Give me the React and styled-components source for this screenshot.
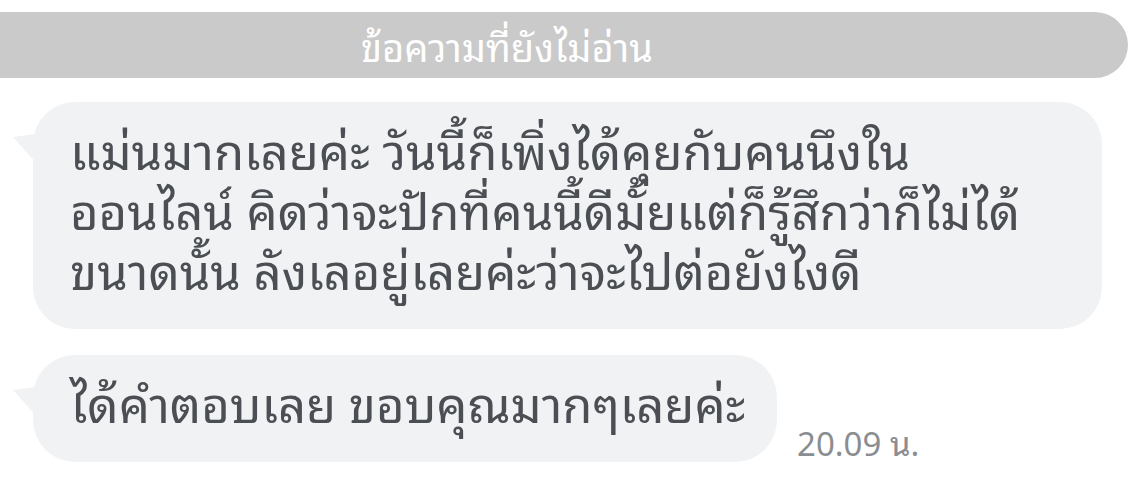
import React from "react";
import styled, { createGlobalStyle } from "styled-components";

const GlobalStyle = createGlobalStyle`
  html, body {
    margin: 0;
    padding: 0;
    background: #ffffff;
  }
  body {
    font-family: "Noto Sans Thai Looped", "Noto Sans Thai", "Noto Sans", sans-serif;
  }
`;

const messages = [
  {
    id: 1,
    lines: [
      "แม่นมากเลยค่ะ วันนี้ก็เพิ่งได้คุยกับคนนึงใน",
      "ออนไลน์ คิดว่าจะปักที่คนนี้ดีมั้ยแต่ก็รู้สึกว่าก็ไม่ได้",
      "ขนาดนั้น ลังเลอยู่เลยค่ะว่าจะไปต่อยังไงดี",
    ],
    width: 1069,
  },
  {
    id: 2,
    lines: ["ได้คำตอบเลย ขอบคุณมากๆเลยค่ะ"],
    width: 744,
    time: "20.09 น.",
  },
];

const App = () => {
  return (
    <>
      <GlobalStyle />
      <Page>
        <UnreadBar>
          <UnreadLabel>ข้อความที่ยังไม่อ่าน</UnreadLabel>
        </UnreadBar>
        {messages.map((msg) => (
          <MessageRow key={msg.id}>
            <Bubble $width={msg.width}>
              {msg.lines.map((line) => (
                <Line key={line}>{line}</Line>
              ))}
            </Bubble>
            {msg.time && <Time>{msg.time}</Time>}
          </MessageRow>
        ))}
      </Page>
    </>
  );
};

export default App;

/** styled component */
const Page = styled.div`
  width: 1137px;
  height: 483px;
  padding-top: 12px;
  box-sizing: border-box;
  overflow: hidden;
`;

const UnreadBar = styled.div`
  width: 1128px;
  height: 66px;
  box-sizing: border-box;
  padding-right: 114px;
  background: #cacaca;
  border-radius: 0 33px 33px 0;
  display: flex;
  align-items: center;
  justify-content: center;
`;

const UnreadLabel = styled.span`
  color: #ffffff;
  font-size: 38px;
  line-height: 1;
`;

const MessageRow = styled.div`
  display: flex;
  align-items: flex-end;
  gap: 20px;
  margin-top: 24px;

  & + & {
    margin-top: 26px;
  }
`;

const Bubble = styled.div`
  position: relative;
  margin-left: 33px;
  width: ${(p) => p.$width}px;
  box-sizing: border-box;
  padding: 16px 30px 31px 37px;
  background: #f1f2f4;
  border-radius: 42px;

  &::before {
    content: "";
    position: absolute;
    left: -20px;
    top: 32px;
    width: 22px;
    height: 26px;
    background: #f1f2f4;
    clip-path: polygon(0 12%, 100% 0, 100% 100%, 85% 92%);
  }
`;

const Line = styled.div`
  color: #4b4f54;
  font-size: 49px;
  line-height: 60px;
  white-space: nowrap;
`;

const Time = styled.span`
  color: #8a8d91;
  font-size: 33px;
  line-height: 1;
  padding-bottom: 4px;
`;
